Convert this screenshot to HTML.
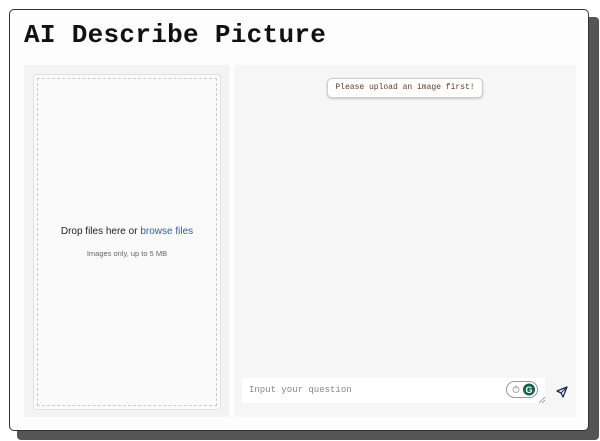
<!DOCTYPE html>
<html><head><style>
body{margin:0;width:600px;height:441px;background:#fff;position:relative;overflow:hidden;font-family:"Liberation Sans",sans-serif}
.shadow{position:absolute;left:17px;top:17px;width:582px;height:423px;background:#555;border-radius:4px}
.card{position:absolute;left:9px;top:9px;width:580px;height:422px;background:#fcfdfc;border:1px solid #333;border-radius:5px;box-sizing:border-box}
h1{position:absolute;left:24px;top:20px;margin:0;font:bold 26px "Liberation Mono",monospace;color:#111;letter-spacing:0.3px}
.lp{position:absolute;left:24px;top:65px;width:205px;height:352px;background:#f3f3f3}
.box{position:absolute;left:33px;top:74px;width:188px;height:336px;background:#fafafa;border:1px solid #e2e2e2;border-radius:3px;box-sizing:border-box}
.dash{position:absolute;left:37px;top:78px;width:180px;height:328px;border:1px dashed #ccc;box-sizing:border-box}
.t1{position:absolute;left:33px;width:188px;top:226px;text-align:center;font-size:10px;color:#222}
.t1 span{color:#2d5fa0}
.t2{position:absolute;left:33px;width:188px;top:249px;text-align:center;font-size:7.5px;color:#666}
.rp{position:absolute;left:234px;top:65px;width:342px;height:352px;background:#f6f6f6}
.toast{position:absolute;left:327px;top:78px;width:156px;height:20px;background:#fff;border:1px solid #ccc;border-radius:5px;box-shadow:0 1px 2px rgba(0,0,0,.2);box-sizing:border-box;font:8px "Liberation Mono",monospace;color:#5a3a2a;text-align:center;line-height:18px}
.inp{position:absolute;left:242px;top:378px;width:303px;height:25px;background:#fff;font:9px "Liberation Mono",monospace;color:#888;line-height:25px;padding-left:7px;box-sizing:border-box}
.g{position:absolute;left:506px;top:381px;width:32px;height:17px;border:1px solid #999;border-radius:9px;background:#fff;box-sizing:border-box}
</style></head><body>
<div class="shadow"></div>
<div class="card"></div>
<h1>AI Describe Picture</h1>
<div class="lp"></div><div class="box"></div><div class="dash"></div>
<div class="t1">Drop files here or <span>browse files</span></div>
<div class="t2">Images only, up to 5 MB</div>
<div class="rp"></div>
<div class="toast">Please upload an image first!</div>
<div class="inp">Input your question</div>
<div class="g"><svg width="30" height="15" style="position:absolute;left:0;top:0"><circle cx="9" cy="7.5" r="3" fill="none" stroke="#aaa" stroke-width="1"/><line x1="9" y1="3.5" x2="9" y2="7" stroke="#aaa"/><circle cx="22" cy="7.5" r="6" fill="#13624c"/><text x="22" y="11" font-size="9" font-weight="bold" fill="#fff" text-anchor="middle" font-family="Liberation Sans">G</text></svg></div>
<svg style="position:absolute;left:538px;top:396px" width="8" height="8"><path d="M1 7L7 1M4 7L7 4" stroke="#888" stroke-width="0.8"/></svg>
<svg style="position:absolute;left:555px;top:385px" width="14" height="14"><path d="M12 2L2 6L6 8L8 12Z" fill="none" stroke="#1e2a50" stroke-width="1.3" stroke-linejoin="round"/><path d="M6 8L12 2" stroke="#1e2a50" stroke-width="1"/></svg>
</body></html>
